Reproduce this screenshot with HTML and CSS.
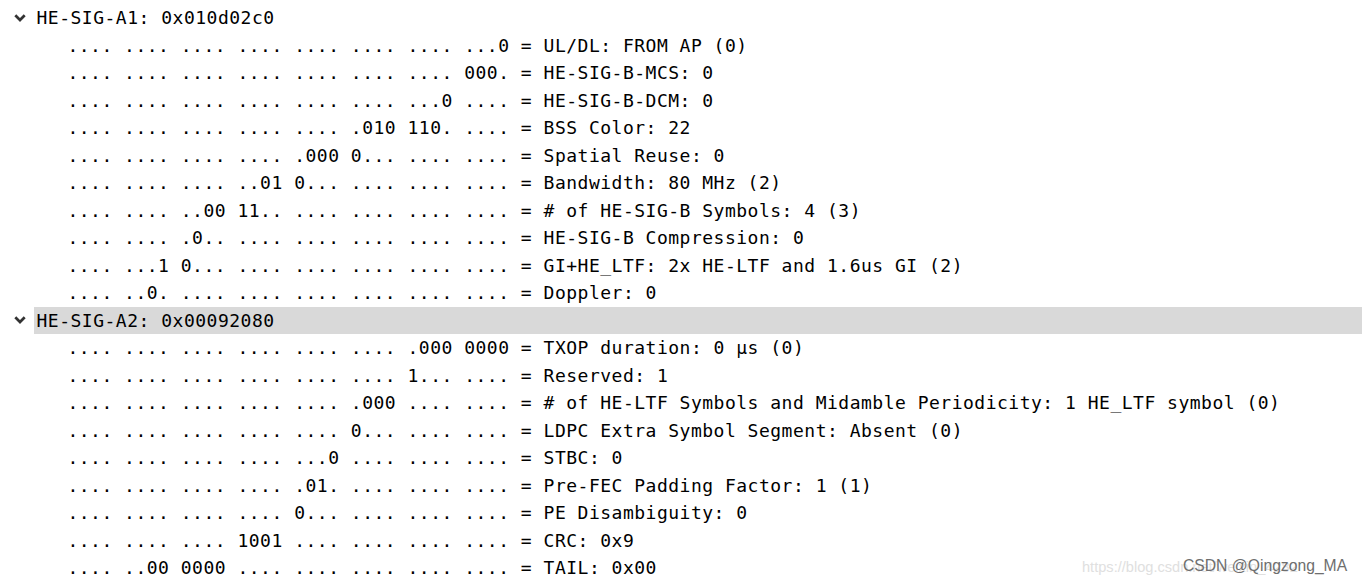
FILE: index.html
```html
<!DOCTYPE html>
<html lang="en">
<head>
<meta charset="utf-8">
<title>HE-SIG-A</title>
<link rel="stylesheet" href="styles.css">
</head>
<body>
<div class="tree">
  <div class="node">
    <div class="head">
      <svg class="chev" width="12" height="8" viewBox="0 0 12 8"><polyline points="1.3,1.3 6,6 10.7,1.3"/></svg>
      <span class="label">HE-SIG-A1: 0x010d02c0</span>
    </div>
    <div class="children">
      <div class="row">.... .... .... .... .... .... .... ...0 = UL/DL: FROM AP (0)</div>
      <div class="row">.... .... .... .... .... .... .... 000. = HE-SIG-B-MCS: 0</div>
      <div class="row">.... .... .... .... .... .... ...0 .... = HE-SIG-B-DCM: 0</div>
      <div class="row">.... .... .... .... .... .010 110. .... = BSS Color: 22</div>
      <div class="row">.... .... .... .... .000 0... .... .... = Spatial Reuse: 0</div>
      <div class="row">.... .... .... ..01 0... .... .... .... = Bandwidth: 80 MHz (2)</div>
      <div class="row">.... .... ..00 11.. .... .... .... .... = # of HE-SIG-B Symbols: 4 (3)</div>
      <div class="row">.... .... .0.. .... .... .... .... .... = HE-SIG-B Compression: 0</div>
      <div class="row">.... ...1 0... .... .... .... .... .... = GI+HE_LTF: 2x HE-LTF and 1.6us GI (2)</div>
      <div class="row">.... ..0. .... .... .... .... .... .... = Doppler: 0</div>
    </div>
  </div>
  <div class="node">
    <div class="head">
      <svg class="chev" width="12" height="8" viewBox="0 0 12 8"><polyline points="1.3,1.3 6,6 10.7,1.3"/></svg>
      <span class="label selected">HE-SIG-A2: 0x00092080</span>
    </div>
    <div class="children">
      <div class="row">.... .... .... .... .... .... .000 0000 = TXOP duration: 0 µs (0)</div>
      <div class="row">.... .... .... .... .... .... 1... .... = Reserved: 1</div>
      <div class="row">.... .... .... .... .... .000 .... .... = # of HE-LTF Symbols and Midamble Periodicity: 1 HE_LTF symbol (0)</div>
      <div class="row">.... .... .... .... .... 0... .... .... = LDPC Extra Symbol Segment: Absent (0)</div>
      <div class="row">.... .... .... .... ...0 .... .... .... = STBC: 0</div>
      <div class="row">.... .... .... .... .01. .... .... .... = Pre-FEC Padding Factor: 1 (1)</div>
      <div class="row">.... .... .... .... 0... .... .... .... = PE Disambiguity: 0</div>
      <div class="row">.... .... .... 1001 .... .... .... .... = CRC: 0x9</div>
      <div class="row">.... ..00 0000 .... .... .... .... .... = TAIL: 0x00</div>
    </div>
  </div>
</div>
<div class="watermark">
  <span class="wm-url">https://blog.csdn.net/weixin_4282</span>
  <span class="wm-name">CSDN @Qingzong_MA</span>
</div>
</body>
</html>
```
FILE: styles.css
```css
html, body {
  margin: 0;
  padding: 0;
  background: #ffffff;
}
body {
  width: 1362px;
  height: 586px;
  overflow: hidden;
  position: relative;
}
.tree {
  padding-top: 4px;
  font-family: "DejaVu Sans Mono", "Liberation Mono", monospace;
  font-size: 18px;
  letter-spacing: 0.5px;
  color: #000000;
}
.head {
  display: flex;
  align-items: center;
  height: 27.5px;
}
.chev {
  margin-left: 14px;
  margin-right: 8px;
  flex: none;
}
.chev polyline {
  fill: none;
  stroke: #333333;
  stroke-width: 2.7;
  stroke-linecap: butt;
  stroke-linejoin: miter;
}
.label {
  flex: 1;
  height: 27.5px;
  line-height: 27.5px;
  padding-left: 2.5px;
  white-space: pre;
}
.label.selected {
  background: #d9d9d9;
}
.row {
  height: 27.5px;
  line-height: 27.5px;
  padding-left: 67.4px;
  white-space: pre;
}
.watermark {
  position: absolute;
  left: 1082px;
  top: 557px;
  width: 280px;
  height: 22px;
  font-family: "Liberation Sans", Arial, sans-serif;
}
.wm-url {
  position: absolute;
  left: 0;
  top: 2px;
  font-size: 14.6px;
  color: #e0e0e0;
  white-space: nowrap;
}
.wm-name {
  position: absolute;
  left: 101px;
  top: 0;
  font-size: 15.7px;
  color: #6e6e6e;
  white-space: nowrap;
}
```
